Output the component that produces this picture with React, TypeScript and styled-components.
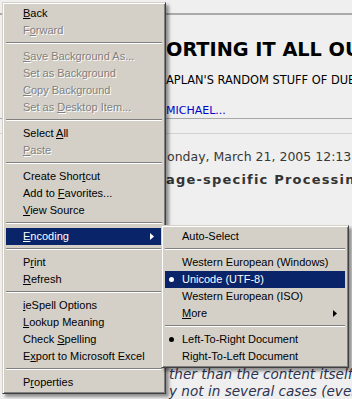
import React from 'react';
import styled, { createGlobalStyle } from 'styled-components';

const GlobalStyle = createGlobalStyle`
  html, body {
    margin: 0;
    padding: 0;
    background: #efefef;
    overflow: hidden;
  }
`;

type Entry =
  | { sep: true }
  | { label: string; disabled?: boolean; active?: boolean; arrow?: boolean; bullet?: boolean };

const mainItems: Entry[] = [
  { label: '&Back' },
  { label: 'F&orward', disabled: true },
  { sep: true },
  { label: '&Save Background As...', disabled: true },
  { label: 'Set as Back&ground', disabled: true },
  { label: '&Copy Background', disabled: true },
  { label: 'Set as &Desktop Item...', disabled: true },
  { sep: true },
  { label: 'Select &All' },
  { label: '&Paste', disabled: true },
  { sep: true },
  { label: 'Create Shor&tcut' },
  { label: 'Add to &Favorites...' },
  { label: '&View Source' },
  { sep: true },
  { label: '&Encoding', active: true, arrow: true },
  { sep: true },
  { label: 'P&rint' },
  { label: '&Refresh' },
  { sep: true },
  { label: '&ieSpell Options' },
  { label: '&Lookup Meaning' },
  { label: 'Check &Spelling' },
  { label: 'E&xport to Microsoft Excel' },
  { sep: true },
  { label: 'P&roperties' },
];

const encodingItems: Entry[] = [
  { label: 'Auto-Select' },
  { sep: true },
  { label: 'Western European (Windows)' },
  { label: 'Unicode (UTF-8)', active: true, bullet: true },
  { label: 'Western European (ISO)' },
  { label: '&More', arrow: true },
  { sep: true },
  { label: 'Left-To-Right Document', bullet: true },
  { label: 'Right-To-Left Document' },
];

const AccessLabel = ({ text }: { text: string }) => {
  const i = text.indexOf('&');
  if (i < 0) return <>{text}</>;
  return (
    <>
      {text.slice(0, i)}
      <Key>{text[i + 1]}</Key>
      {text.slice(i + 2)}
    </>
  );
};

const MenuList = ({ items }: { items: Entry[] }) => (
  <>
    {items.map((it, idx) =>
      'sep' in it ? (
        <Separator key={idx} />
      ) : (
        <Item key={idx} $disabled={it.disabled} $active={it.active}>
          <Mark>{it.bullet && <Bullet $active={it.active} />}</Mark>
          <ItemText>
            <AccessLabel text={it.label} />
          </ItemText>
          <ArrowSlot>
            {it.arrow && (
              <svg width="4" height="7" viewBox="0 0 4 7">
                <polygon points="0,0 4,3.5 0,7" fill={it.active ? '#fff' : '#000'} />
              </svg>
            )}
          </ArrowSlot>
        </Item>
      )
    )}
  </>
);

const App = () => {
  return (
    <Page>
      <GlobalStyle />
      <Rule $top={13} $size={2} $color="#a9a9a9" />
      <Title>ORTING IT ALL OUT</Title>
      <Subtitle>APLAN'S RANDOM STUFF OF DUBIOUS VALUE</Subtitle>
      <Author>MICHAEL...</Author>
      <Rule $top={0} $size={1} $color="#a9a9a9" />
      <Rule $top={14} $size={1} $color="#d2d2d2" />
      <DateLine>onday, March 21, 2005 12:13 PM</DateLine>
      <PostTitle>age-specific Processing</PostTitle>
      <Quote>
        <QuoteLine>ther than the content itself</QuoteLine>
        <QuoteLine>y not in several cases (even</QuoteLine>
      </Quote>

      <ContextMenu>
        <MenuList items={mainItems} />
      </ContextMenu>
      <SubMenu>
        <MenuList items={encodingItems} />
      </SubMenu>
    </Page>
  );
};

export default App;

const Page = styled.div`
  position: relative;
  width: 352px;
  height: 399px;
  overflow: hidden;
  background: #efefef;
  display: flex;
  flex-direction: column;
  font-family: "DejaVu Sans", Verdana, sans-serif;
  white-space: nowrap;
`;

const Rule = styled.div<{ $top: number; $size: number; $color: string }>`
  margin-top: ${(p) => p.$top}px;
  height: ${(p) => p.$size}px;
  background: ${(p) => p.$color};
  flex-shrink: 0;
`;

const Title = styled.div`
  margin-top: 23px;
  padding-left: 166px;
  height: 24px;
  line-height: 24px;
  font-size: 19.3px;
  font-weight: bold;
  color: #000;
`;

const Subtitle = styled.div`
  margin-top: 11px;
  padding-left: 166px;
  height: 14px;
  line-height: 14px;
  font-size: 11.4px;
  color: #000;
`;

const Author = styled.div`
  margin-top: 17px;
  padding-left: 166px;
  height: 14px;
  line-height: 14px;
  font-size: 11px;
  color: #0000cc;
`;

const DateLine = styled.div`
  margin-top: 16px;
  padding-left: 167px;
  height: 14px;
  line-height: 14px;
  font-size: 12.5px;
  color: #383838;
`;

const PostTitle = styled.div`
  margin-top: 8px;
  padding-left: 166px;
  height: 16px;
  line-height: 16px;
  font-size: 13px;
  font-weight: bold;
  letter-spacing: 1.2px;
  color: #333;
`;

const Quote = styled.div`
  margin-top: auto;
  margin-bottom: -1px;
  padding-left: 169px;
  display: flex;
  flex-direction: column;
`;

const QuoteLine = styled.div`
  height: 17px;
  line-height: 17px;
  font-size: 13.6px;
  font-style: italic;
  color: #2e3350;
`;

const MenuBox = styled.div`
  position: absolute;
  box-sizing: border-box;
  background: #d4d0c8;
  border: 1px solid;
  border-color: #d4d0c8 #404040 #404040 #d4d0c8;
  box-shadow: inset 1px 1px 0 #fff, inset -1px -1px 0 #808080, 3px 3px 3px rgba(0, 0, 0, 0.4);
  padding: 2px 3px;
  font-family: "Liberation Sans", Arial, sans-serif;
  font-size: 11px;
  color: #000;
`;

const ContextMenu = styled(MenuBox)`
  left: 2px;
  top: 2px;
  width: 164px;
`;

const SubMenu = styled(MenuBox)`
  left: 161px;
  top: 225px;
  width: 188px;
`;

const Item = styled.div<{ $disabled?: boolean; $active?: boolean }>`
  display: grid;
  grid-template-columns: 12px 1fr 12px;
  align-items: center;
  height: 17px;
  line-height: 17px;
  background: ${(p) => (p.$active ? '#0a246a' : 'transparent')};
  color: ${(p) => (p.$active ? '#fff' : p.$disabled ? '#808080' : '#000')};
  text-shadow: ${(p) => (p.$disabled ? '1px 1px 0 #fff' : 'none')};
`;

const Mark = styled.div`
  display: flex;
  justify-content: center;
  align-items: center;
`;

const Bullet = styled.span<{ $active?: boolean }>`
  width: 5px;
  height: 5px;
  border-radius: 50%;
  background: ${(p) => (p.$active ? '#fff' : '#000')};
`;

const ItemText = styled.span`
  padding-left: 5px;
`;

const ArrowSlot = styled.div`
  display: flex;
  align-items: center;
  justify-content: flex-start;
`;

const Key = styled.span`
  text-decoration: underline;
  text-underline-offset: 1px;
`;

const Separator = styled.div`
  height: 9px;
  box-sizing: border-box;
  padding-top: 3px;
  &::before {
    content: '';
    display: block;
    border-top: 1px solid #808080;
    border-bottom: 1px solid #fff;
  }
`;
